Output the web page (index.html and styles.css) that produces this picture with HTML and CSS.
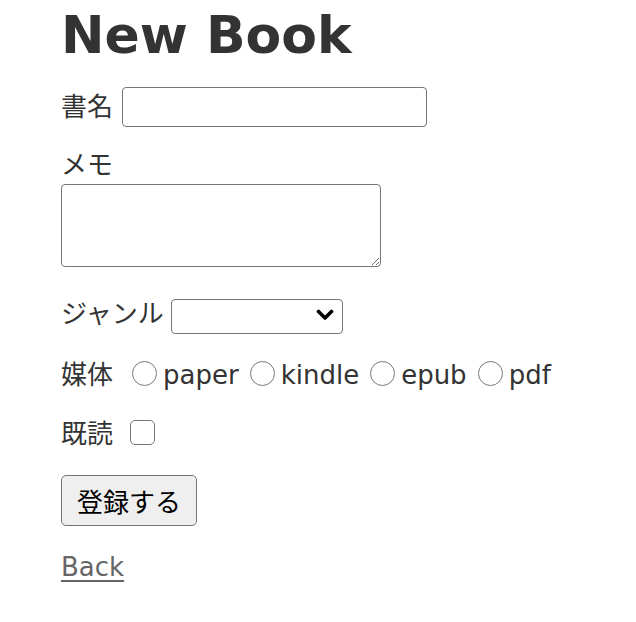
FILE: index.html
```html
<!DOCTYPE html>
<html lang="ja">
<head>
    <meta charset="UTF-8">
    <title>New Book</title>
    <link rel="stylesheet" href="styles.css">
</head>
<body>
    <div class="page">
        <h1>New Book</h1>
        <form class="book-form">
            <div class="field field-title">
                <label for="book_title">書名</label>
                <input type="text" id="book_title" class="text-input">
            </div>
            <div class="field field-memo">
                <label for="book_memo">メモ</label>
                <textarea id="book_memo" class="memo-input"></textarea>
            </div>
            <div class="field field-genre">
                <label for="book_genre">ジャンル</label>
                <span class="select-wrap">
                    <select id="book_genre" class="genre-select">
                        <option value=""></option>
                    </select>
                    <svg class="select-arrow" width="18" height="12" viewBox="0 0 18 12" fill="none" stroke="#000" stroke-width="3.6" stroke-linecap="round" stroke-linejoin="round">
                        <polyline points="2.5 2.5 9 9 15.5 2.5"></polyline>
                    </svg>
                </span>
            </div>
            <div class="field field-media">
                <span class="field-label">媒体</span>
                <label class="choice"><input type="radio" name="media" value="paper" class="radio">paper</label>
                <label class="choice"><input type="radio" name="media" value="kindle" class="radio">kindle</label>
                <label class="choice"><input type="radio" name="media" value="epub" class="radio">epub</label>
                <label class="choice"><input type="radio" name="media" value="pdf" class="radio">pdf</label>
            </div>
            <div class="field field-read">
                <label for="book_read">既読</label>
                <input type="checkbox" id="book_read" class="check">
            </div>
            <div class="actions">
                <button type="button" class="submit-button">登録する</button>
            </div>
        </form>
        <a href="#" class="back-link">Back</a>
    </div>
</body>
</html>
```

FILE: styles.css
```css
* {
    box-sizing: border-box;
}

body {
    margin: 0;
    background-color: #fff;
    color: #333;
    font-family: "DejaVu Sans", "Noto Sans CJK JP", sans-serif;
    font-size: 26px;
    line-height: 36px;
}

.page {
    padding: 5px 0 0 61px;
}

h1 {
    margin: 0;
    font-size: 52px;
    line-height: 60px;
    font-weight: bold;
}

.book-form {
    display: flex;
    flex-direction: column;
}

.field {
    display: flex;
    align-items: center;
}

.field-title {
    margin-top: 22px;
    gap: 9px;
}

.text-input {
    width: 305px;
    height: 40px;
    border: 1.5px solid #767676;
    border-radius: 4px;
    font-size: 26px;
}

.field-memo {
    flex-direction: column;
    align-items: flex-start;
    margin-top: 20px;
}

.memo-input {
    width: 320px;
    height: 83px;
    margin-top: 1px;
    border: 1.5px solid #767676;
    border-radius: 4px;
    font-size: 20px;
    resize: both;
}

.field-genre {
    margin-top: 29px;
    gap: 7px;
}

.select-wrap {
    position: relative;
    display: inline-block;
    height: 35px;
}

.genre-select {
    appearance: none;
    width: 172px;
    height: 35px;
    border: 1.5px solid #767676;
    border-radius: 4px;
    background-color: #fff;
    font-size: 22px;
}

.select-arrow {
    position: absolute;
    right: 9px;
    top: 12px;
    pointer-events: none;
}

.field-media {
    margin-top: 25px;
}

.field-label {
    margin-right: 19px;
}

.choice {
    display: flex;
    align-items: center;
    margin-right: 11px;
}

.radio {
    appearance: none;
    width: 25px;
    height: 25px;
    margin: -4px 6px 0 0;
    border: 1.5px solid #7a7a7a;
    border-radius: 50%;
    background-color: #fff;
}

.field-read {
    margin-top: 23px;
}

.check {
    appearance: none;
    width: 25px;
    height: 25px;
    margin: -4px 0 0 17px;
    border: 1.5px solid #767676;
    border-radius: 5px;
    background-color: #fff;
}

.actions {
    margin-top: 23px;
}

.submit-button {
    width: 136px;
    height: 51px;
    padding: 0 15px;
    border: 1.5px solid #767676;
    border-radius: 5px;
    background-color: #efefef;
    color: #000;
    font-family: "Noto Sans CJK JP", sans-serif;
    font-size: 26px;
}

.back-link {
    display: inline-block;
    margin-top: 23px;
    color: #666;
    text-decoration: underline;
    text-underline-offset: 4px;
}
```
